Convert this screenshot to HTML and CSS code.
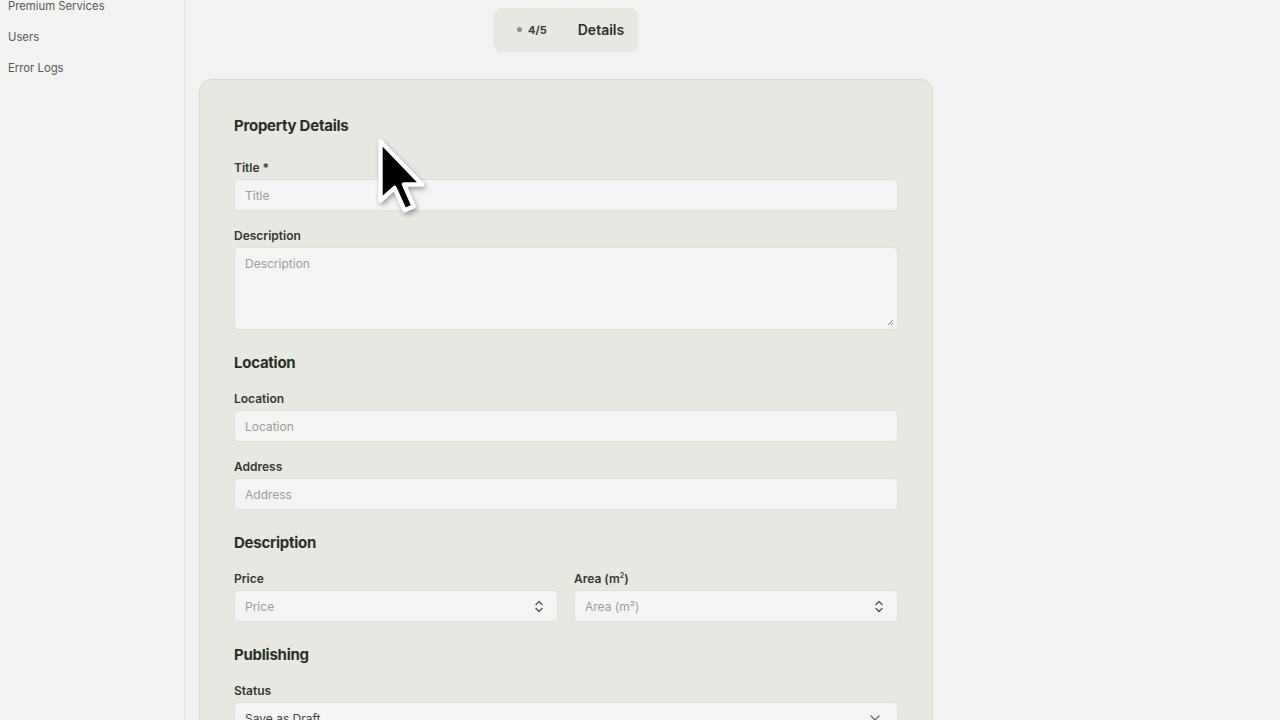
FILE: index.html
```html
<!DOCTYPE html>
<html lang="en">
<head>
<meta charset="utf-8">
<title>Property Details</title>
<link rel="stylesheet" href="styles.css">
</head>
<body>
<div class="app">
  <aside class="sidebar">
    <nav class="nav">
      <a class="nav-item">Premium Services</a>
      <a class="nav-item">Users</a>
      <a class="nav-item">Error Logs</a>
    </nav>
  </aside>
  <main class="main">
    <div class="column">
      <div class="stepper">
        <span class="step-count"><span class="dot"></span>4/5</span>
        <span class="step-name">Details</span>
      </div>
      <form class="card">
        <h2 class="section-title first">Property Details</h2>
        <div class="field">
          <label class="label">Title *</label>
          <div class="box"><input class="control" placeholder="Title"></div>
        </div>
        <div class="field">
          <label class="label">Description</label>
          <div class="box box-area"><textarea class="control area" placeholder="Description"></textarea>
            <svg class="grip" width="7" height="7" viewBox="0 0 7 7"><path d="M6 1 L1 6 M6 4 L4 6" stroke="#888" stroke-width="1"/></svg>
          </div>
        </div>

        <h2 class="section-title">Location</h2>
        <div class="field">
          <label class="label">Location</label>
          <div class="box"><input class="control" placeholder="Location"></div>
        </div>
        <div class="field">
          <label class="label">Address</label>
          <div class="box"><input class="control" placeholder="Address"></div>
        </div>

        <h2 class="section-title">Description</h2>
        <div class="row">
          <div class="field">
            <label class="label">Price</label>
            <div class="box"><input class="control" placeholder="Price">
              <svg class="spin" width="8" height="13" viewBox="0 0 8 13"><path d="M1 4.5 L4 1.5 L7 4.5 M1 8.5 L4 11.5 L7 8.5" fill="none" stroke="#555" stroke-width="1.4" stroke-linecap="round" stroke-linejoin="round"/></svg>
            </div>
          </div>
          <div class="field">
            <label class="label">Area (m<sup>2</sup>)</label>
            <div class="box"><input class="control" placeholder="Area (m²)">
              <svg class="spin" width="8" height="13" viewBox="0 0 8 13"><path d="M1 4.5 L4 1.5 L7 4.5 M1 8.5 L4 11.5 L7 8.5" fill="none" stroke="#555" stroke-width="1.4" stroke-linecap="round" stroke-linejoin="round"/></svg>
            </div>
          </div>
        </div>

        <h2 class="section-title">Publishing</h2>
        <div class="field">
          <label class="label">Status</label>
          <div class="box"><span class="control value">Save as Draft</span>
            <svg class="chev" width="10" height="6" viewBox="0 0 10 6"><path d="M1 1 L5 5 L9 1" fill="none" stroke="#666" stroke-width="1.3" stroke-linecap="round" stroke-linejoin="round"/></svg>
          </div>
        </div>
      </form>
    </div>
  </main>
</div>
<svg class="cursor" width="56" height="84" viewBox="-2 -2 20 30">
  <defs>
    <filter id="sh" x="-50%" y="-50%" width="200%" height="200%">
      <feDropShadow dx="0.6" dy="1" stdDeviation="0.9" flood-color="#000" flood-opacity="0.35"/>
    </filter>
  </defs>
  <path d="M0 0 L0 21 L5 16.5 L8.6 24.5 L11.8 23.1 L8.3 15.3 L14.8 15.3 Z" fill="#000" stroke="#fff" stroke-width="1.5" stroke-linejoin="round" filter="url(#sh)"/>
</svg>
</body>
</html>
```
FILE: styles.css
```css
* { box-sizing: border-box; }
html, body { margin: 0; height: 720px; overflow: hidden; }
body {
  background: #f2f2f1;
  font-family: Inter, "Noto Sans", "Liberation Sans", sans-serif;
  color: #2b2f2b;
  position: relative;
}
.app { display: flex; height: 720px; }
.sidebar {
  width: 185px;
  flex: none;
  border-right: 1px solid #e3e3e1;
  background: #f3f3f2;
}
.nav {
  display: flex;
  flex-direction: column;
  gap: 14px;
  margin-top: -2px;
  padding-left: 8px;
}
.nav-item {
  font-size: 11.3px;
  line-height: 17px;
  color: #555a55;
}
.main { flex: 1; padding-left: 14px; }
.column { width: 734px; display: flex; flex-direction: column; align-items: center; }
.stepper {
  margin-top: 8px;
  width: 144px;
  height: 43px;
  background: #e8e8e3;
  border-radius: 8px;
  box-shadow: 0 1px 2px rgba(0,0,0,0.06);
  display: flex;
  align-items: center;
  padding-left: 23px;
  gap: 31px;
}
.step-count {
  display: flex;
  align-items: center;
  gap: 6px;
  font-size: 11px;
  font-weight: 700;
  color: #3a3d3a;
}
.dot { width: 5px; height: 5px; border-radius: 50%; background: #8d8f8b; }
.step-name { font-size: 14px; font-weight: 600; color: #2b2f2b; }
.card {
  margin-top: 28px;
  width: 734px;
  background: #e8e8e2;
  border: 1px solid #dcdcd6;
  border-radius: 12px;
  padding: 36px 34px 40px 34px;
  display: flex;
  flex-direction: column;
}
.section-title {
  margin: 5px 0 19px;
  font-size: 15px;
  line-height: 20px;
  font-weight: 700;
  color: #263026;
  letter-spacing: -0.25px;
}
.section-title.first { margin: 0 0 25px; }
.field { display: flex; flex-direction: column; margin-bottom: 18px; }
.label {
  font-size: 12px;
  line-height: 14px;
  font-weight: 600;
  color: #333733;
  margin-bottom: 4px;
}
.label sup { font-size: 7px; vertical-align: 5px; line-height: 0; }
.box {
  height: 32px;
  background: #f4f4f2;
  border: 1px solid #e0e0dc;
  border-radius: 4px;
  display: flex;
  align-items: center;
  padding: 0 14px 0 10px;
  position: relative;
}
.box-area { height: 83px; align-items: flex-start; padding-top: 8px; }
.control {
  flex: 1;
  border: 0;
  background: transparent;
  outline: none;
  font: inherit;
  font-size: 12px;
  color: #333;
  padding: 0;
}
.control::placeholder { color: #9c9e9a; }
.area { resize: none; height: 64px; }
.value { color: #444; }
.grip { position: absolute; right: 3px; bottom: 3px; }
.spin { flex: none; }
.chev { flex: none; margin-right: 3px; }
.row { display: grid; grid-template-columns: 1fr 1fr; gap: 16px; }
.cursor { position: absolute; left: 375px; top: 136px; }
```
